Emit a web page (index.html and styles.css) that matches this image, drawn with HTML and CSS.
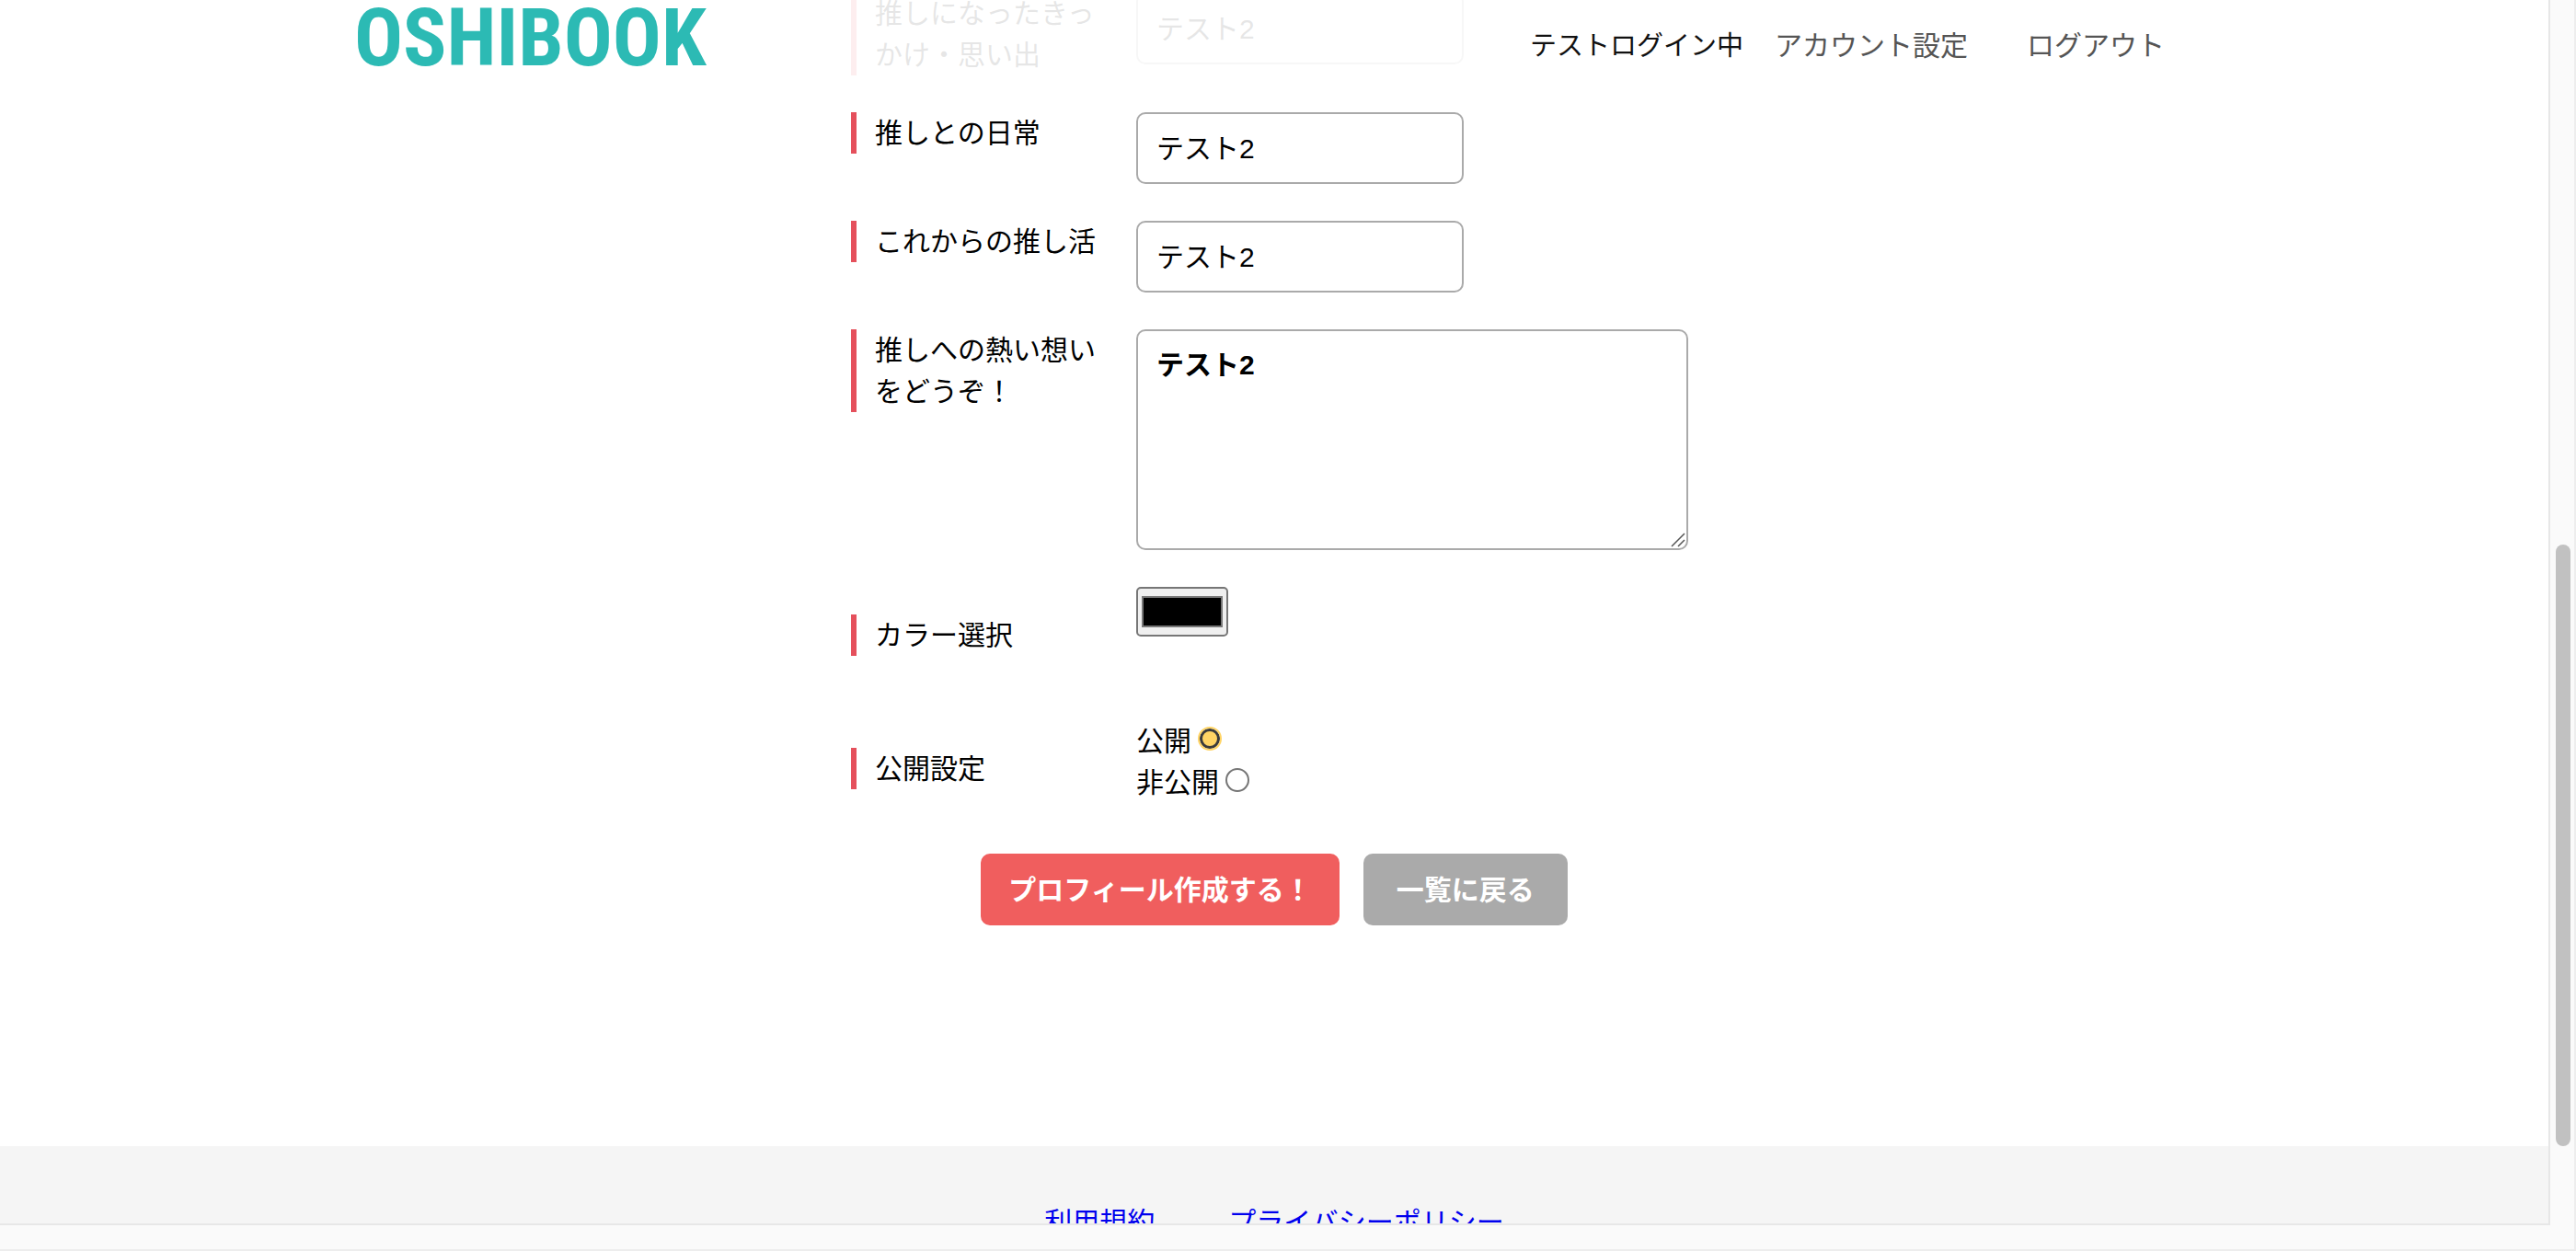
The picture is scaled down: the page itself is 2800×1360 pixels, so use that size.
FILE: index.html
```html
<!DOCTYPE html>
<html lang="ja">
<head>
<meta charset="utf-8">
<title>OSHIBOOK</title>
<link rel="stylesheet" href="styles.css">
</head>
<body>
<div class="frame">
  <div class="page">
    <header class="header">
      <div class="header-inner">
        <a class="logo" href="#">OSHIBOOK</a>
        <nav class="nav">
          <span class="nav-status">テストログイン中</span>
          <a class="nav-link" href="#">アカウント設定</a>
          <a class="nav-link" href="#">ログアウト</a>
        </nav>
      </div>
    </header>
    <main class="main">
      <form class="form">
        <div class="row">
          <label class="label" for="memory">推しになったきっかけ・思い出</label>
          <input class="text" id="memory" type="text" value="テスト2">
        </div>
        <div class="row">
          <label class="label" for="daily">推しとの日常</label>
          <input class="text" id="daily" type="text" value="テスト2">
        </div>
        <div class="row">
          <label class="label" for="future">これからの推し活</label>
          <input class="text" id="future" type="text" value="テスト2">
        </div>
        <div class="row">
          <label class="label" for="passion">推しへの熱い想いをどうぞ！</label>
          <div class="area-wrap">
            <textarea class="area" id="passion">テスト2</textarea>
            <svg class="grip" viewBox="0 0 16 16" aria-hidden="true"><path d="M1 15 15 1M8 15l7-7" fill="none" stroke="#555" stroke-width="1.5"/></svg>
          </div>
        </div>
        <div class="row">
          <label class="label label-spaced" for="color">カラー選択</label>
          <input class="color" id="color" type="color" value="#000000">
        </div>
        <div class="row" role="radiogroup" aria-labelledby="visibility">
          <span class="label label-spaced" id="visibility">公開設定</span>
          <div class="options">
            <label class="option">公開<input class="radio" type="radio" name="visibility" checked></label>
            <label class="option">非公開<input class="radio" type="radio" name="visibility"></label>
          </div>
        </div>
        <div class="actions">
          <button class="button button-primary" type="submit">プロフィール作成する！</button>
          <button class="button button-back" type="button">一覧に戻る</button>
        </div>
      </form>
    </main>
    <footer class="footer">
      <a class="footer-link" href="#">利用規約</a>
      <a class="footer-link" href="#">プライバシーポリシー</a>
    </footer>
  </div>
  <div class="track"><div class="thumb"></div></div>
</div>
</body>
</html>
```

FILE: styles.css
```css
* {
  box-sizing: border-box;
}

body {
  margin: 0;
  font-family: "Liberation Sans", "Noto Sans CJK JP", sans-serif;
  font-size: 30px;
  line-height: 45px;
  color: #000;
  background: #fff;
}

/* Window frame with the scrollbar gutters */
.frame {
  display: grid;
  grid-template-columns: 1fr 26px;
  grid-template-rows: 1fr 26px;
  height: 100vh;
  overflow: hidden;
  background: #fafafa;
  border: solid #ededed;
  border-width: 0 2px 2px 0;
}

.page {
  position: relative;
  overflow: hidden;
  min-height: 0;
  background: #fff;
  border: solid #e7e7e7;
  border-width: 0 2px 2px 0;
}

.track {
  display: grid;
  grid-template-rows: 592fr 654fr 86fr;
  padding: 0 4px 0 6px;
}

.thumb {
  grid-row: 2;
  border-radius: 8px;
  background: #c1c1c1;
}

/* Header */
.header {
  position: absolute;
  top: 0;
  left: 0;
  right: 0;
  z-index: 1;
  background: rgba(255, 255, 255, 0.9);
}

.header-inner {
  display: flex;
  justify-content: space-between;
  align-items: flex-start;
  max-width: 2000px;
  margin: 0 auto;
}

.logo {
  font-family: "Roboto Condensed", Roboto, "Liberation Sans", sans-serif;
  font-size: 88px;
  font-weight: 700;
  line-height: 82px;
  color: #2cbab4;
  text-decoration: none;
}

.nav {
  display: flex;
  padding-right: 32px;
  line-height: 100px;
}

.nav-status {
  margin-right: 34px;
  font-size: 29px;
  color: #111;
}

.nav-link {
  color: #555;
  text-decoration: none;
}

.nav-link + .nav-link {
  margin-left: 64px;
}

/* Form */
.main {
  margin-top: -8px;
}

.form {
  display: flex;
  flex-direction: column;
  gap: 40px;
  max-width: 920px;
  margin: 0 auto;
  padding-bottom: 240px;
}

.row {
  display: flex;
  align-items: flex-start;
  gap: 40px;
}

.label {
  flex: 0 0 270px;
  padding-left: 20px;
  border-left: 6px solid #e5505c;
}

.label-spaced {
  margin: 30px 0;
}

.text,
.area {
  display: block;
  font: inherit;
  color: #000;
  background: #fff;
  border: 2px solid #aaa;
  border-radius: 10px;
}

.text {
  width: 356px;
  height: 78px;
  padding: 0 20px 4px;
}

.area-wrap {
  position: relative;
}

.area {
  width: 600px;
  height: 240px;
  padding: 14px 20px;
  font-weight: 700;
  resize: none;
}

.grip {
  position: absolute;
  right: 3px;
  bottom: 3px;
  width: 16px;
  height: 16px;
}

.color {
  width: 100px;
  height: 54px;
  padding: 0;
  appearance: none;
  background: #efefef;
  border: 2px solid #767676;
  border-radius: 5px;
}

.color::-webkit-color-swatch-wrapper {
  padding: 8px 4px;
}

.color::-webkit-color-swatch {
  border: 2px solid #777;
  border-radius: 0;
}

.options {
  display: flex;
  flex-direction: column;
}

.option {
  display: flex;
  gap: 7px;
}

.radio {
  width: 26px;
  height: 26px;
  margin: 7px 0 0;
  appearance: none;
  background: #fff;
  border: 2px solid #767676;
  border-radius: 50%;
}

.radio:checked {
  background: #ffd464;
  border: 3px solid #3b3b3b;
  outline: 2px solid #ffd464;
  width: 22px;
  height: 22px;
  margin: 9px 2px 0;
}

.actions {
  display: flex;
  justify-content: center;
  gap: 26px;
}

.button {
  height: 78px;
  font: inherit;
  font-weight: 700;
  color: #fff;
  border: 0;
  border-radius: 10px;
}

.button-primary {
  padding: 0 30px;
  background: #f05e5e;
}

.button-back {
  padding: 0 36px;
  background: #aaa;
}

/* Footer */
.footer {
  display: flex;
  justify-content: center;
  gap: 80px;
  padding: 60px 0;
  background: #f5f5f5;
}

.footer-link {
  color: #00e;
  text-decoration: none;
}
```
